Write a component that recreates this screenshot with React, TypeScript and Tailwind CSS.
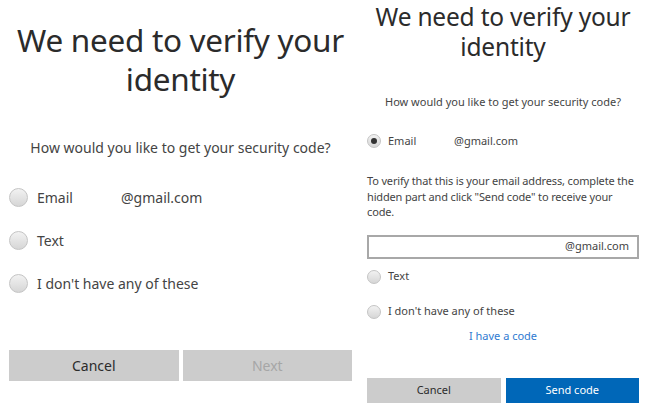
import React from "react";

function Radio({ size, checked }: { size: number; checked?: boolean }) {
  return (
    <span
      className="inline-flex shrink-0 items-center justify-center rounded-full border border-[#c4c4c4] bg-gradient-to-b from-[#f2f2f2] to-[#d6d6d6]"
      style={{ width: size, height: size }}
    >
      {checked && <span className="block h-[6px] w-[6px] rounded-full bg-[#333]" />}
    </span>
  );
}

export default function App() {
  return (
    <div className="flex h-[414px] w-[650px] overflow-hidden bg-white text-[#333]" style={{ fontFamily: '"Noto Sans", "Open Sans", sans-serif' }}>
      {/* Left panel */}
      <div className="flex w-[361px] shrink-0 flex-col pl-[9px] pr-[9px]">
        <h1 className="mt-[20px] text-center text-[31.5px] font-normal leading-[39px] text-[#2b2b2b] tracking-[-0.3px]">
          We need to verify your identity
        </h1>
        <p className="mt-[40px] text-center text-[14px] leading-[20px] text-[#444]">
          How would you like to get your security code?
        </p>
        <div className="mt-[28px] flex h-[22px] items-center">
          <Radio size={19} />
          <span className="ml-[9px] w-[84px] text-[14px] text-[#444]">Email</span>
          <span className="text-[14px] text-[#444]">@gmail.com</span>
        </div>
        <div className="mt-[21px] flex h-[22px] items-center">
          <Radio size={19} />
          <span className="ml-[9px] text-[14px] text-[#444]">Text</span>
        </div>
        <div className="mt-[21px] flex h-[22px] items-center">
          <Radio size={19} />
          <span className="ml-[9px] text-[14px] text-[#444]">I don't have any of these</span>
        </div>
        <div className="mt-[56px] flex gap-[4px]">
          <button className="h-[31px] flex-1 bg-[#cccccc] text-[14px] text-[#2b2b2b]">Cancel</button>
          <button className="h-[31px] flex-1 bg-[#cccccc] text-[14px] text-[#a6a6a6]">Next</button>
        </div>
      </div>

      {/* Right panel */}
      <div className="flex w-[289px] shrink-0 flex-col pl-[6px] pr-[11px]">
        <h1 className="mt-[2px] text-center text-[24.5px] font-normal leading-[30px] text-[#2b2b2b] tracking-[-0.2px]">
          We need to verify your identity
        </h1>
        <p className="mt-[32px] text-center text-[11px] leading-[15px] text-[#444]">
          How would you like to get your security code?
        </p>
        <div className="mt-[24px] flex h-[16px] items-center">
          <Radio size={14} checked />
          <span className="ml-[7px] w-[66px] text-[11px] text-[#444]">Email</span>
          <span className="text-[11px] text-[#444]">@gmail.com</span>
        </div>
        <p className="mt-[24px] whitespace-nowrap text-[11px] leading-[15.5px] tracking-[-0.15px] text-[#444]">
          To verify that this is your email address, complete the
          <br />
          hidden part and click "Send code" to receive your
          <br />
          code.
        </p>
        <div className="mt-[15px] flex h-[24px] items-center justify-end border-2 border-[#a8a8a8] pr-[8px] text-[11px] text-[#444]">
          @gmail.com
        </div>
        <div className="mt-[10px] flex h-[16px] items-center">
          <Radio size={14} />
          <span className="ml-[7px] text-[11px] text-[#444]">Text</span>
        </div>
        <div className="mt-[19px] flex h-[16px] items-center">
          <Radio size={14} />
          <span className="ml-[7px] text-[11px] text-[#444]">I don't have any of these</span>
        </div>
        <div className="mt-[8px] text-center text-[11px] leading-[16px] text-[#2f7bd1]">I have a code</div>
        <div className="mt-[34px] flex gap-[5px]">
          <button className="h-[25px] flex-1 bg-[#cccccc] text-[11px] text-[#2b2b2b]">Cancel</button>
          <button className="h-[25px] flex-1 bg-[#0067b8] text-[11px] text-white">Send code</button>
        </div>
      </div>
    </div>
  );
}
